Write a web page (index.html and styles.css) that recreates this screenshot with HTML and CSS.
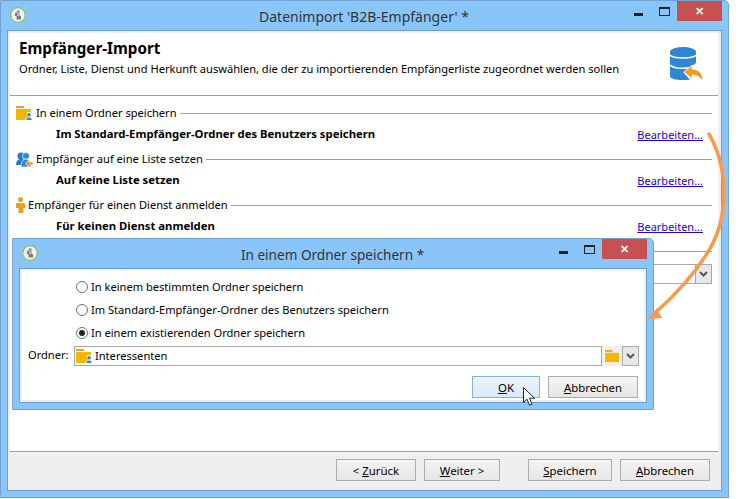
FILE: index.html
```html
<!DOCTYPE html>
<html lang="de">
<head>
  <meta charset="UTF-8">
  <title>Datenimport</title>
  <link rel="stylesheet" href="styles.css">
</head>
<body>

<svg class="defs" width="0" height="0">
  <symbol id="folder" viewBox="0 0 16 14">
    <path d="M0 0h8v2H0z" fill="#ef9c2a"/>
    <path d="M0 3h15v10H0z" fill="#f2b705"/>
  </symbol>
  <symbol id="folder-user" viewBox="0 0 16 14">
    <path d="M0 0h8v2H0z" fill="#ef9c2a"/>
    <path d="M0 3h15v11H0z" fill="#f2b705"/>
    <circle cx="13" cy="8.500" r="2.400" fill="#fff"/>
    <path d="M9.500 14v-1.500l2-1h3l2 1V14z" fill="#fff"/>
    <circle cx="13" cy="8.800" r="1.800" fill="#2f86d4"/>
    <path d="M10.500 14v-1.500l1.700-.8h1.600l1.700.8V14z" fill="#2f86d4"/>
  </symbol>
  <symbol id="app" viewBox="0 0 16 16">
    <circle cx="8" cy="8" r="7.300" fill="#f2f2f2" stroke="#8ec45c" stroke-width="1.300"/>
    <path d="M7 3.500h2.500v5l1.500 1v3H6.500V9H5V6l2-1z" fill="#7c7c7c"/>
    <path d="M8 5v4" stroke="#f2f2f2"/>
  </symbol>
</svg>

<div class="window">
  <div class="titlebar">
    <svg class="app-icon"><use href="#app"/></svg>
    <div class="title">Datenimport 'B2B-Empfänger' *</div>
    <div class="controls">
      <span class="ctl-min"></span>
      <span class="ctl-max"></span>
      <span class="ctl-close">✕</span>
    </div>
  </div>

  <div class="client">
    <div class="panel">
      <div class="header">
        <div class="header-text">
          <h1>Empfänger-Import</h1>
          <p>Ordner, Liste, Dienst und Herkunft auswählen, die der zu importierenden Empfängerliste zugeordnet werden sollen</p>
        </div>
        <svg class="db-icon" width="35" height="35" viewBox="0 0 35 35">
          <path d="M1 5v24c0 2.500 5 4 13 4 3 0 5-.2 7-.6L14 25l13-9V5z" fill="#2f86d4"/>
          <ellipse cx="14" cy="5" rx="13" ry="5" fill="#2f86d4"/>
          <path d="M1 8c3 4 23 4 26 0M1 18c3 3.500 14 4 20 2.500" fill="none" stroke="#fff" stroke-width="1.500"/>
          <path d="M15 25l8-7v4c7 0 11 5 11 12-3-4-7-6-11-6v4z" fill="#ef9c1f" stroke="#fff" stroke-width=".8"/>
        </svg>
      </div>

      <div class="sections">
        <div class="group">
          <div class="legend">
            <svg class="ic-folder"><use href="#folder-user"/></svg>
            <span>In einem Ordner speichern</span>
            <i class="rule"></i>
          </div>
          <div class="row">
            <b>Im Standard-Empfänger-Ordner des Benutzers speichern</b>
            <a href="#">Bearbeiten...</a>
          </div>
        </div>

        <div class="group">
          <div class="legend">
            <svg class="ic-group" viewBox="0 0 17 15">
              <circle cx="5" cy="4" r="3.500" fill="#2878c8"/>
              <path d="M0 13c0-4 2-6 5-6s5 2 5 6z" fill="#2878c8"/>
              <circle cx="10" cy="4" r="3.500" fill="#2f86d4" stroke="#fff" stroke-width=".7"/>
              <path d="M5 15c0-5 2-8 5-8s5 3 5 8z" fill="#2f86d4" stroke="#fff" stroke-width=".7"/>
              <path d="M9 11.500l4-3.500v2h4v3h-4v2z" fill="#ef9c1f" stroke="#fff" stroke-width=".5"/>
            </svg>
            <span>Empfänger auf eine Liste setzen</span>
            <i class="rule"></i>
          </div>
          <div class="row">
            <b>Auf keine Liste setzen</b>
            <a href="#">Bearbeiten...</a>
          </div>
        </div>

        <div class="group">
          <div class="legend">
            <svg class="ic-person" viewBox="0 0 9 16">
              <circle cx="4.500" cy="2.500" r="2.500" fill="#ef9c1f"/>
              <path d="M1 6h7l1 1v4H7.500v5h-5v-5H0V7z" fill="#ef9c1f"/>
            </svg>
            <span>Empfänger für einen Dienst anmelden</span>
            <i class="rule"></i>
          </div>
          <div class="row">
            <b>Für keinen Dienst anmelden</b>
            <a href="#">Bearbeiten...</a>
          </div>
        </div>

        <div class="group">
          <div class="legend">
            <span>Herkunft</span>
            <i class="rule"></i>
          </div>
          <div class="field-behind">
            <span class="field-input"></span>
            <span class="drop"><svg width="9" height="6" viewBox="0 0 9 6"><path d="M1 1l3.500 3.500L8 1" fill="none" stroke="#555" stroke-width="2"/></svg></span>
          </div>
        </div>
      </div>
    </div>

    <div class="footer">
      <button class="btn btn-back">&lt; <u>Z</u>urück</button>
      <button class="btn btn-next"><u>W</u>eiter &gt;</button>
      <button class="btn btn-save"><u>S</u>peichern</button>
      <button class="btn btn-cancel"><u>A</u>bbrechen</button>
    </div>
  </div>
</div>

<div class="window dialog">
  <div class="titlebar">
    <svg class="app-icon"><use href="#app"/></svg>
    <div class="title">In einem Ordner speichern *</div>
    <div class="controls">
      <span class="ctl-min"></span>
      <span class="ctl-max"></span>
      <span class="ctl-close">✕</span>
    </div>
  </div>
  <div class="client">
    <div class="dialog-panel">
      <label class="radio"><span class="dot"></span>In keinem bestimmten Ordner speichern</label>
      <label class="radio"><span class="dot"></span>Im Standard-Empfänger-Ordner des Benutzers speichern</label>
      <label class="radio"><span class="dot on"></span>In einem existierenden Ordner speichern</label>
      <div class="folder-row">
        <span class="folder-label">Ordner:</span>
        <div class="folder-input">
          <svg class="ic-folder"><use href="#folder-user"/></svg>
          <span>Interessenten</span>
        </div>
        <span class="folder-btn"><svg width="15" height="13"><use href="#folder"/></svg></span>
        <span class="drop"><svg width="9" height="6" viewBox="0 0 9 6"><path d="M1 1l3.500 3.500L8 1" fill="none" stroke="#555" stroke-width="2"/></svg></span>
      </div>
      <div class="dialog-buttons">
        <button class="btn btn-ok"><u>O</u>K</button>
        <button class="btn btn-cancel"><u>A</u>bbrechen</button>
      </div>
    </div>
  </div>
</div>

<svg class="cursor" width="13" height="20" viewBox="0 0 13 20">
  <path d="M.5.5v15l3.500-3.300 2.500 6 2.500-1-2.500-6h5z" fill="#fff" stroke="#222" stroke-width="1"/>
</svg>

<svg class="arrow" width="749" height="499" viewBox="0 0 749 499">
  <path d="M709 134C727 165 731 215 708 252C692 278 672 298 654 314" fill="none" stroke="#f79a4c" stroke-width="3.500" stroke-linecap="round"/>
  <path d="M648 319l9-11 5 10z" fill="#f79a4c"/>
</svg>

</body>
</html>
```

FILE: styles.css
```css
body {
  margin: 0;
  background: #fff;
  font-family: "Noto Sans", sans-serif;
  font-size: 11.1px;
  color: #000;
}
.defs {
  position: absolute;
}
button {
  font: inherit;
  font-size: 11.4px;
}

/* window frame */
.window {
  box-sizing: border-box;
  width: 729px;
  height: 498px;
  display: flex;
  flex-direction: column;
  background: #8ac5fa;
  border: 1px solid #6fa3d4;
  border-top-right-radius: 5px;
  padding: 0 6px 6px;
}
.titlebar {
  position: relative;
  height: 29px;
  flex: none;
  display: flex;
  justify-content: center;
  align-items: center;
}
.app-icon {
  position: absolute;
  left: 3px;
  top: 6px;
  width: 16px;
  height: 16px;
}
.title {
  font-size: 14px;
  color: #333;
  margin-left: -1px;
  margin-top: 1px;
}
.dialog .title {
  font-size: 13.6px;
}
.controls {
  position: absolute;
  right: 0;
  top: 0;
  display: flex;
}
.ctl-min {
  width: 9px;
  height: 3px;
  background: #222;
  margin: 12px 16px 0 0;
}
.ctl-max {
  box-sizing: border-box;
  width: 11px;
  height: 9px;
  border: 1px solid #222;
  border-top-width: 2px;
  margin: 6px 7px 0 0;
}
.ctl-close {
  width: 45px;
  height: 20px;
  background: #c75050;
  color: #fff;
  text-align: center;
  line-height: 20px;
  font-size: 11px;
  font-weight: bold;
}
.client {
  flex: 1;
  display: flex;
  flex-direction: column;
  background: #efefef;
  border: 1px solid #6a9fd3;
  min-height: 0;
}

/* main panel */
.panel {
  flex: 1;
  background: #fff;
  margin: 2px 3px 0 2px;
}
.header {
  box-sizing: border-box;
  height: 63px;
  display: flex;
  justify-content: space-between;
  padding: 6px 14px 0 9px;
  border-bottom: 1px solid #a0a0a0;
}
.header h1 {
  font-size: 15.2px;
  line-height: 18px;
  margin: 0;
}
.header p {
  margin: 4px 0 0;
  line-height: 16px;
}
.db-icon {
  margin-top: 8px;
}
.sections {
  padding: 7px 6px 0;
}
.legend {
  display: flex;
  align-items: center;
  height: 20px;
  gap: 3px;
}
.legend span {
  margin-bottom: 2px;
}
.rule {
  flex: 1;
  border-top: 1px solid #a0a0a0;
}
.ic-folder {
  width: 16px;
  height: 14px;
  margin-right: 1px;
}
.ic-group {
  width: 17px;
  height: 15px;
}
.ic-person {
  width: 9px;
  height: 16px;
}
.row {
  display: flex;
  justify-content: space-between;
  align-items: center;
  height: 22px;
  margin-bottom: 4px;
  padding: 0 9px 0 40px;
}
.row b {
  font-size: 11.3px;
  margin-bottom: 2px;
}
.row a {
  color: #2200ee;
  font-size: 11px;
  margin-top: 1px;
}
.field-behind {
  display: flex;
  height: 20px;
  margin: 3px 0 0 40px;
}
.field-input {
  flex: 1;
  border: 1px solid #a8a8a8;
  border-right: 0;
}
.drop {
  box-sizing: border-box;
  width: 17px;
  display: flex;
  align-items: center;
  justify-content: center;
  background: #e8e8e8;
  border: 1px solid #a8a8a8;
}

/* footer buttons */
.footer {
  height: 39px;
  box-sizing: border-box;
  flex: none;
  display: flex;
  justify-content: flex-end;
  align-items: flex-start;
  gap: 8px;
  padding: 8px 11px 0 0;
  position: relative;
}
.footer::before {
  content: "";
  position: absolute;
  left: 2px;
  right: 3px;
  top: 0;
  border-top: 1px solid #a0a0a0;
}
.btn {
  height: 22px;
  padding: 0;
  color: #000;
  background: linear-gradient(#f4f4f4, #e6e6e6);
  border: 1px solid #acacac;
}
.btn-back { width: 80px; }
.btn-next { width: 76px; margin-right: 20px; }
.btn-save { width: 84px; }
.btn-cancel { width: 90px; }

/* dialog, floats over the main window */
.window.dialog {
  position: absolute;
  left: 12px;
  top: 238px;
  width: 642px;
  height: 172px;
}
.dialog .client {
  padding: 2px;
}
.dialog-panel {
  flex: 1;
  background: #fff;
  padding: 4px 6px 0 6px;
}
.radio {
  display: flex;
  align-items: center;
  height: 23px;
  margin-left: 48px;
  gap: 3px;
}
.dot {
  box-sizing: border-box;
  width: 12px;
  height: 12px;
  border: 1px solid #707070;
  border-radius: 50%;
  background: #fff;
  display: flex;
  align-items: center;
  justify-content: center;
}
.dot.on::before {
  content: "";
  width: 6px;
  height: 6px;
  border-radius: 50%;
  background: #222;
}
.folder-row {
  display: flex;
  align-items: stretch;
  height: 20px;
  margin: 2px -1px 0 0;
}
.folder-label {
  width: 46px;
  line-height: 18px;
}
.folder-input {
  flex: 1;
  display: flex;
  align-items: center;
  gap: 2px;
  box-sizing: border-box;
  border: 1px solid #a8a8a8;
  padding-left: 1px;
}
.folder-input span {
  margin-bottom: 2px;
}
.folder-btn {
  width: 20px;
  display: flex;
  align-items: center;
  justify-content: center;
  background: #efefef;
}
.dialog-buttons {
  display: flex;
  justify-content: flex-end;
  gap: 8px;
  margin-top: 10px;
}
.btn-ok {
  width: 68px;
  background: linear-gradient(#ecf5fd, #d8eafa);
  border-color: #7eb4ea;
}

/* mouse pointer and the hand-drawn arrow of the screenshot */
.cursor {
  position: absolute;
  left: 523px;
  top: 387px;
}
.arrow {
  position: absolute;
  left: 0;
  top: 0;
  pointer-events: none;
}
```
